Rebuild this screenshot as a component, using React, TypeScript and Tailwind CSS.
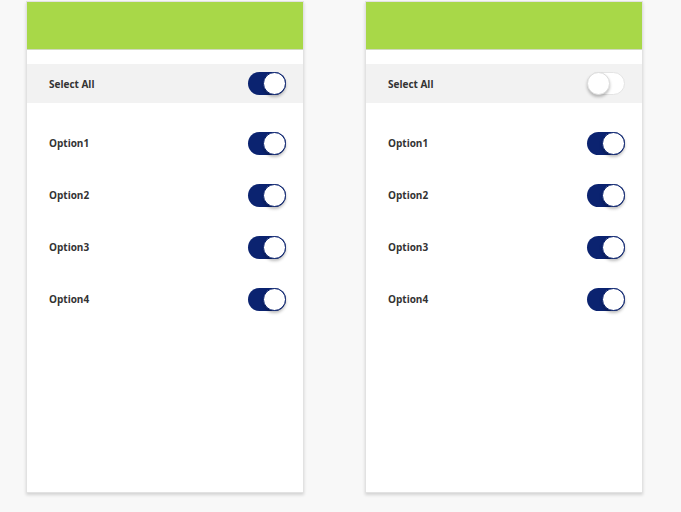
import React from "react";

function Toggle({ on }: { on: boolean }) {
  return on ? (
    <div className="relative w-[38px] h-[23px] rounded-full bg-[#0b2370]">
      <div className="absolute right-0 top-0 w-[23px] h-[23px] rounded-full bg-white border-[1.5px] border-[#0b2370] shadow-[0_2px_3px_rgba(0,0,0,0.25)]" />
    </div>
  ) : (
    <div className="relative w-[38px] h-[23px] rounded-full bg-white border border-[#e4e4e4]">
      <div className="absolute left-[-1px] top-[-1px] w-[23px] h-[23px] rounded-full bg-white border border-[#dcdcdc] shadow-[0_2px_3px_rgba(0,0,0,0.25)]" />
    </div>
  );
}

function Card({ selectAll }: { selectAll: boolean }) {
  const opts = ["Option1", "Option2", "Option3", "Option4"];
  return (
    <div className="w-[278px] h-[492px] bg-white border border-[#e2e2e2] shadow-[0_2px_3px_rgba(0,0,0,0.15)] flex flex-col">
      <div className="h-[48px] bg-[#a8d848] border-b border-[#cfd9bd]" />
      <div className="h-[14px]" />
      <div className="h-[39px] bg-[#f2f2f2] flex items-center justify-between pl-[22px] pr-[17px]">
        <span className="text-[10px] font-bold text-[#333] pt-[1px]">Select All</span>
        <Toggle on={selectAll} />
      </div>
      <div className="pt-[14px] flex flex-col">
        {opts.map((o) => (
          <div key={o} className="h-[52px] flex items-center justify-between pl-[22px] pr-[17px]">
            <span className="text-[10px] font-bold text-[#333]">{o}</span>
            <Toggle on={true} />
          </div>
        ))}
      </div>
    </div>
  );
}

export default function App() {
  return (
    <div
      className="w-[681px] h-[512px] bg-[#f8f8f8] flex gap-[61px] pl-[26px] pt-[1px]"
      style={{ fontFamily: "'Open Sans', Lato, sans-serif" }}
    >
      <Card selectAll={true} />
      <Card selectAll={false} />
    </div>
  );
}
